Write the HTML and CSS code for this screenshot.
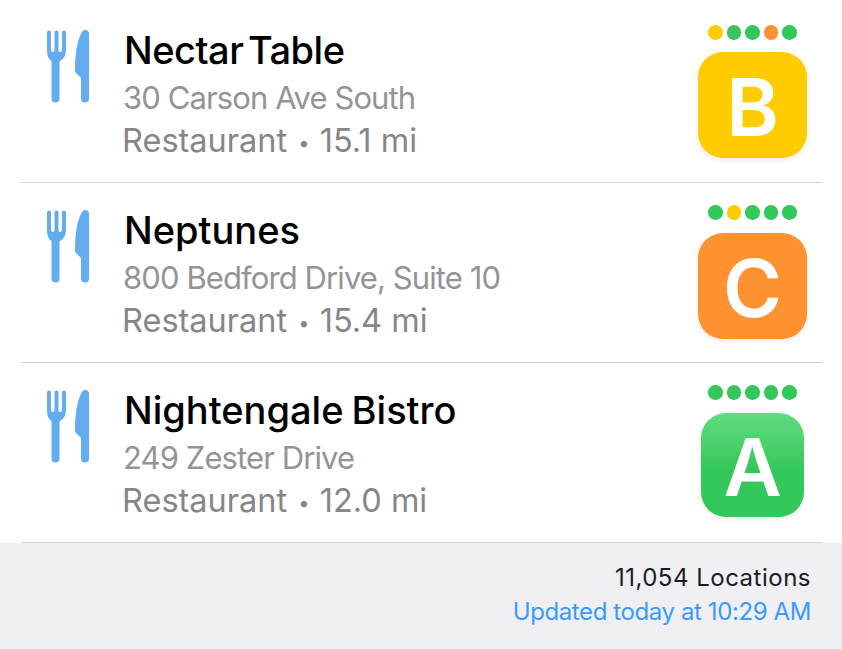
FILE: index.html
```html
<!DOCTYPE html>
<html lang="en">
<head>
    <meta charset="UTF-8">
    <meta name="viewport" content="width=device-width, initial-scale=1.0">
    <title>Locations</title>
    <link rel="stylesheet" href="styles.css">
</head>
<body>
    <svg class="defs" width="0" height="0">
        <symbol id="utensils" viewBox="0 0 46 74">
            <path d="M2 3.500a2 2 0 0 1 4 0V20q0 3 2.500 3 1 0 1-2V3.500a2 2 0 0 1 4 0V21q0 2 1 2 2.500 0 2.500-3V3.500a2 2 0 0 1 4 0V21q0 8-6.500 11.500V69.500a4 4 0 0 1-8 0V32.500Q2 29 2 21Z"/>
            <path d="M40 1a4 4 0 0 1 4 4v64.500a4 4 0 0 1-8 0V50q0-2-2-3l-3-3q-1-1-1-3 0-26 7-38 1-2 3-2Z"/>
        </symbol>
    </svg>

    <ul class="place-list">
        <li class="place">
            <svg class="place-icon"><use href="#utensils"/></svg>
            <div class="place-text">
                <div class="place-name place-name-tight">Nectar Table</div>
                <div class="place-address">30 Carson Ave South</div>
                <div class="place-meta">Restaurant <span class="bullet">•</span> 15.1 mi</div>
            </div>
            <div class="place-grade">
                <div class="dots">
                    <span class="dot yellow"></span>
                    <span class="dot green"></span>
                    <span class="dot green"></span>
                    <span class="dot orange"></span>
                    <span class="dot green"></span>
                </div>
                <div class="badge badge-b">B</div>
            </div>
        </li>
        <li class="place">
            <svg class="place-icon"><use href="#utensils"/></svg>
            <div class="place-text">
                <div class="place-name">Neptunes</div>
                <div class="place-address">800 Bedford Drive, Suite 10</div>
                <div class="place-meta">Restaurant <span class="bullet">•</span> 15.4 mi</div>
            </div>
            <div class="place-grade">
                <div class="dots">
                    <span class="dot green"></span>
                    <span class="dot yellow"></span>
                    <span class="dot green"></span>
                    <span class="dot green"></span>
                    <span class="dot green"></span>
                </div>
                <div class="badge badge-c">C</div>
            </div>
        </li>
        <li class="place">
            <svg class="place-icon"><use href="#utensils"/></svg>
            <div class="place-text">
                <div class="place-name">Nightengale Bistro</div>
                <div class="place-address">249 Zester Drive</div>
                <div class="place-meta">Restaurant <span class="bullet">•</span> 12.0 mi</div>
            </div>
            <div class="place-grade">
                <div class="dots">
                    <span class="dot green"></span>
                    <span class="dot green"></span>
                    <span class="dot green"></span>
                    <span class="dot green"></span>
                    <span class="dot green"></span>
                </div>
                <div class="badge badge-a">A</div>
            </div>
        </li>
    </ul>

    <footer class="summary">
        <div class="summary-count">11,054 Locations</div>
        <div class="summary-updated">Updated today at 10:29 AM</div>
    </footer>
</body>
</html>
```

FILE: styles.css
```css
body {
    font-family: Inter, "Liberation Sans", sans-serif;
    margin: 0;
    height: 649px;
    overflow: hidden;
    background-color: #fff;
}

.defs {
    position: absolute;
}

.place-list {
    list-style: none;
    margin: 0;
    padding: 3px 20px 0 21px;
}

.place {
    display: flex;
    height: 179px;
    border-bottom: 1px solid #d4d4d6;
}

.place-icon {
    width: 46px;
    height: 74px;
    margin: 26px 0 0 24px;
    fill: #63acef;
    flex: none;
}

.place-text {
    flex: 1;
    margin-left: 33px;
    padding-top: 24px;
}

.place-name {
    font-size: 38px;
    font-weight: 500;
    line-height: 46px;
    color: #000;
    word-spacing: -2px;
}

.place-name-tight {
    word-spacing: -5px;
    letter-spacing: -0.5px;
}

.place-address {
    margin-left: -1px;
    font-size: 31px;
    line-height: 49px;
    letter-spacing: -0.9px;
    color: #949497;
}

.place-meta {
    margin-left: -2px;
    font-size: 32.500px;
    line-height: 37px;
    color: #86868a;
}

.bullet {
    font-size: 20px;
    vertical-align: 2px;
    margin: 0 1px 0 2px;
}

.place-grade {
    width: 109px;
    margin-right: 15px;
    display: flex;
    flex-direction: column;
    align-items: center;
    padding-top: 22px;
}

.dots {
    display: flex;
    gap: 4px;
}

.dot {
    width: 14.600px;
    height: 14.600px;
    border-radius: 50%;
}

.green { background-color: #34c759; }
.yellow { background-color: #fc0; }
.orange { background-color: #ff9230; }

.badge {
    width: 109px;
    height: 106px;
    box-sizing: border-box;
    padding-top: 3px;
    margin-top: 12px;
    border-radius: 25px;
    display: flex;
    align-items: center;
    justify-content: center;
    color: #fff;
    font-size: 80px;
    font-weight: 600;
    box-shadow: 0 2px 6px rgba(0, 0, 0, 0.08);
}

.badge-b { background-color: #fc0; }

.badge-c {
    margin-top: 13px;
    background-color: #ff9230;
}

.badge-a {
    width: 103px;
    height: 104px;
    margin-top: 13px;
    background: linear-gradient(#62dc80, #34c759 55%);
}

.summary {
    height: 106px;
    box-sizing: border-box;
    padding: 18px 31px 0 0;
    background-color: #efeff4;
    text-align: right;
    font-size: 24px;
    line-height: 34px;
}

.summary-count {
    color: #1c1c1e;
    letter-spacing: 0.5px;
}

.summary-updated {
    color: #3a9bfb;
    letter-spacing: -0.4px;
}
```
